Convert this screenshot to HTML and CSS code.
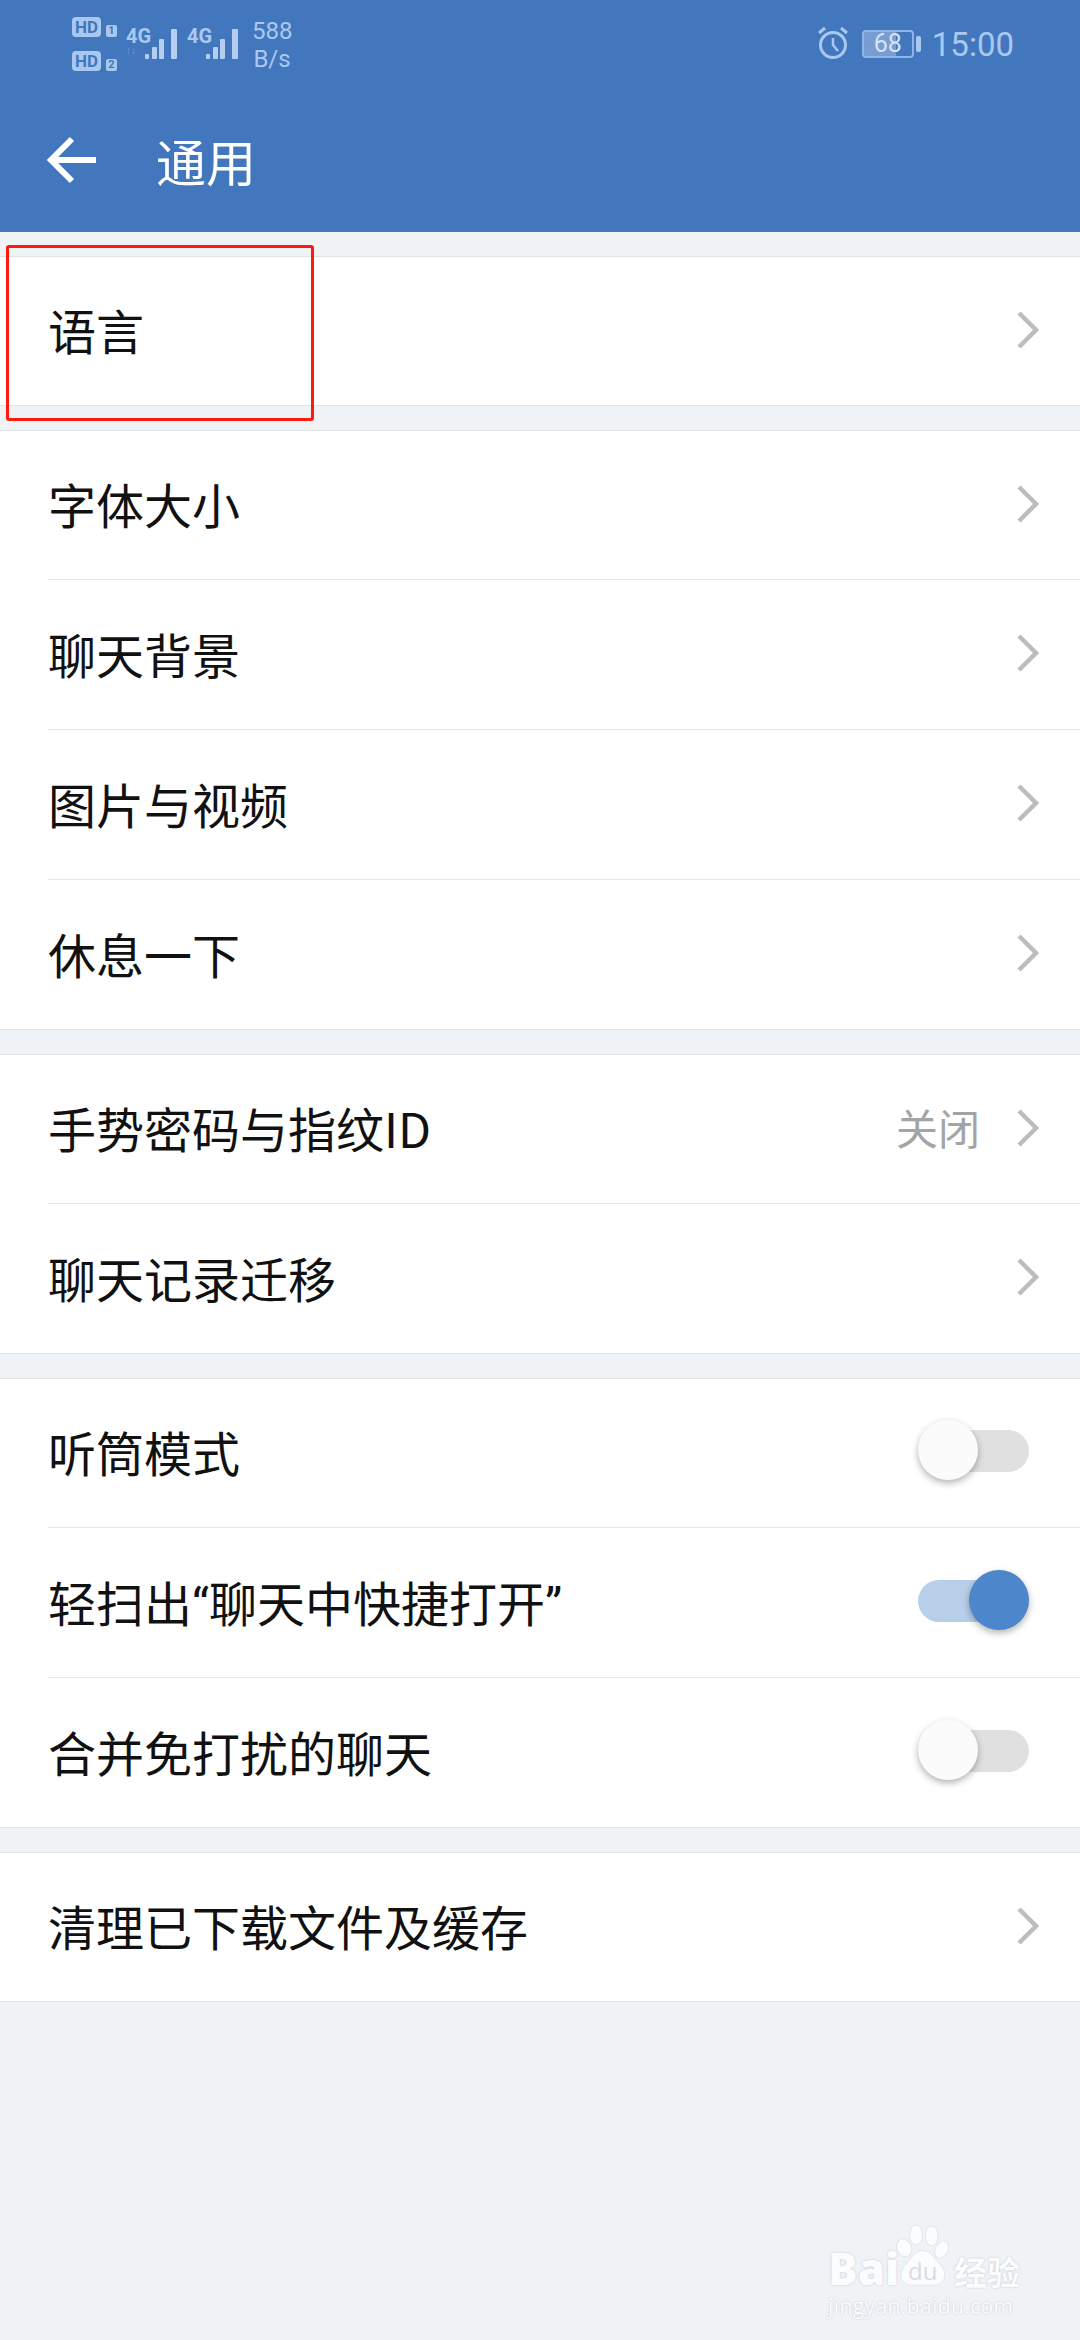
FILE: index.html
```html
<!DOCTYPE html>
<html lang="zh-CN">
<head>
    <meta charset="UTF-8">
    <meta name="viewport" content="width=device-width, initial-scale=1.0">
    <title>通用</title>
    <link rel="stylesheet" href="styles.css">
</head>
<body>
    <div id="screen">
        <div class="header">
            <div class="statusBar">
                <div class="statusLeft">
                    <div class="hdCol">
                        <div class="hdRow"><span class="hd">HD</span><span class="sim">1</span></div>
                        <div class="hdRow"><span class="hd">HD</span><span class="sim">2</span></div>
                    </div>
                    <div class="signal">
                        <div class="netCol"><span class="net">4G</span><span class="updown">↑↓</span></div>
                        <svg width="34" height="32" viewBox="0 0 34 32"><g fill="#b5cef0"><rect x="1" y="26" width="4" height="5" rx="1"/><rect x="8" y="19" width="5" height="12" rx="1"/><rect x="15" y="11" width="5" height="20" rx="1"/><rect x="27" y="1" width="6" height="30" rx="1"/></g></svg>
                    </div>
                    <div class="signal">
                        <div class="netCol"><span class="net">4G</span></div>
                        <svg width="34" height="32" viewBox="0 0 34 32"><g fill="#b5cef0"><rect x="1" y="26" width="4" height="5" rx="1"/><rect x="8" y="19" width="5" height="12" rx="1"/><rect x="15" y="11" width="5" height="20" rx="1"/><rect x="27" y="1" width="6" height="30" rx="1"/></g></svg>
                    </div>
                    <div class="speed">588<br>B/s</div>
                </div>
                <div class="statusRight">
                    <svg class="alarm" width="32" height="34" viewBox="0 0 32 34" fill="none" stroke="#a9c8f0" stroke-width="3">
                        <circle cx="16" cy="19" r="12.5"/>
                        <path d="M16 12v7l5 6" stroke-width="2.5"/>
                        <path d="M2 7l6-5M30 7l-6-5"/>
                    </svg>
                    <div class="battery"><div class="batteryBox"><span class="batteryFill"></span><span class="batteryNum">68</span></div><span class="batteryTip"></span></div>
                    <span class="clock">15:00</span>
                </div>
            </div>
            <div class="navBar">
                <svg class="back" width="50" height="48" viewBox="0 0 50 48" fill="none" stroke="#fff" stroke-width="6"><path d="M49 24H5M25 3L4 24l21 21"/></svg>
                <h1 class="title">通用</h1>
            </div>
        </div>

        <div class="group">
            <div class="row"><span class="label">语言</span><svg class="arrow" viewBox="0 0 22 38"><path d="M2 2l17 17L2 36"/></svg></div>
        </div>

        <div class="group">
            <div class="row"><span class="label">字体大小</span><svg class="arrow" viewBox="0 0 22 38"><path d="M2 2l17 17L2 36"/></svg></div>
            <div class="row"><span class="label">聊天背景</span><svg class="arrow" viewBox="0 0 22 38"><path d="M2 2l17 17L2 36"/></svg></div>
            <div class="row"><span class="label">图片与视频</span><svg class="arrow" viewBox="0 0 22 38"><path d="M2 2l17 17L2 36"/></svg></div>
            <div class="row"><span class="label">休息一下</span><svg class="arrow" viewBox="0 0 22 38"><path d="M2 2l17 17L2 36"/></svg></div>
        </div>

        <div class="group">
            <div class="row"><span class="label">手势密码与指纹ID</span><span class="value">关闭</span><svg class="arrow" viewBox="0 0 22 38"><path d="M2 2l17 17L2 36"/></svg></div>
            <div class="row"><span class="label">聊天记录迁移</span><svg class="arrow" viewBox="0 0 22 38"><path d="M2 2l17 17L2 36"/></svg></div>
        </div>

        <div class="group">
            <div class="row"><span class="label">听筒模式</span><span class="toggle"><span class="knob"></span></span></div>
            <div class="row"><span class="label">轻扫出<span class="quote">“</span>聊天中快捷打开<span class="quote">”</span></span><span class="toggle on"><span class="knob"></span></span></div>
            <div class="row"><span class="label">合并免打扰的聊天</span><span class="toggle"><span class="knob"></span></span></div>
        </div>

        <div class="group">
            <div class="row"><span class="label">清理已下载文件及缓存</span><svg class="arrow" viewBox="0 0 22 38"><path d="M2 2l17 17L2 36"/></svg></div>
        </div>

        <div class="redBox"></div>

        <div class="watermark">
            <div class="wmTop">
                <span class="wmBai">Bai</span>
                <div class="wmPaw">
                    <svg width="53" height="64" viewBox="0 0 58 70">
                        <g fill="#fbfcfe" stroke="#dfe3e8" stroke-width="1">
                            <ellipse cx="9" cy="26" rx="8" ry="10" transform="rotate(-25 9 26)"/>
                            <ellipse cx="22" cy="12" rx="7" ry="11"/>
                            <ellipse cx="39" cy="13" rx="7" ry="11"/>
                            <ellipse cx="50" cy="28" rx="7" ry="10" transform="rotate(25 50 28)"/>
                            <path d="M29 29c10 0 14 10 20 16 8 8 5 22-8 22H18C5 67 1 54 10 45c6-6 9-16 19-16z"/>
                        </g>
                    </svg>
                    <span class="wmDu">du</span>
                </div>
                <span class="wmCn">经验</span>
            </div>
            <div class="wmUrl">jingyan.baidu.com</div>
        </div>
    </div>
</body>
</html>
```

FILE: styles.css
```css
*{
    box-sizing: border-box;
}
html,body{
    margin: 0;
    padding: 0;
}
body{
    background-color: #f0f3f6;
    font-family: "Noto Sans CJK SC", "Noto Sans", sans-serif;
}
#screen{
    position: relative;
    width: 1080px;
    height: 2340px;
    overflow: hidden;
}

.header{
    height: 232px;
    background-color: #4277bd;
    color: #fff;
}
.statusBar{
    display: flex;
    justify-content: space-between;
    height: 72px;
    padding: 17px 66px 0 72px;
    color: #a9c8f0;
    font-family: Roboto, sans-serif;
}
.statusLeft{
    display: flex;
}
.hdCol{
    display: flex;
    flex-direction: column;
    gap: 14px;
    margin-right: 9px;
}
.hdRow{
    display: flex;
    align-items: flex-end;
    gap: 5px;
    height: 20px;
}
.hd{
    width: 29px;
    height: 20px;
    border-radius: 4px;
    background-color: #a9c8f0;
    color: #4277bd;
    font-size: 17px;
    font-weight: 700;
    line-height: 20px;
    text-align: center;
}
.sim{
    width: 11px;
    height: 12px;
    border-radius: 2px;
    background-color: #a9c8f0;
    color: #4277bd;
    font-size: 11px;
    font-weight: 700;
    line-height: 12px;
    text-align: center;
}
.signal{
    display: flex;
    width: 61px;
    height: 44px;
    padding-top: 11px;
}
.netCol{
    display: flex;
    flex-direction: column;
    width: 18px;
}
.net{
    font-family: "Liberation Sans Narrow", Roboto, sans-serif;
    font-size: 20px;
    font-weight: 700;
    line-height: 16px;
}
.updown{
    margin-top: 2px;
    color: #7ea4d8;
    font-size: 10px;
    line-height: 10px;
}
.signal svg{
    flex-shrink: 0;
}
.speed{
    margin-left: 4px;
    width: 40px;
    font-size: 24px;
    line-height: 28px;
    text-align: center;
}
.statusRight{
    display: flex;
    align-items: flex-start;
}
.alarm{
    margin-top: 9px;
}
.battery{
    display: flex;
    align-items: center;
    height: 28px;
    margin: 13px 11px 0 13px;
}
.batteryBox{
    position: relative;
    width: 52px;
    height: 28px;
    border: 2px solid #8fb4e6;
    border-radius: 4px;
    overflow: hidden;
}
.batteryFill{
    position: absolute;
    left: 0;
    top: 0;
    bottom: 0;
    width: 68%;
    background-color: rgba(200, 215, 240, 0.4);
}
.batteryNum{
    position: relative;
    display: block;
    color: #d5e3f5;
    font-size: 25px;
    line-height: 24px;
    text-align: center;
}
.batteryTip{
    width: 5px;
    height: 16px;
    margin-left: 2px;
    border-radius: 2px;
    background-color: #a9c8f0;
}
.clock{
    margin-top: 9px;
    font-size: 33px;
    line-height: 38px;
}

.navBar{
    display: flex;
    align-items: center;
    height: 160px;
    padding: 16px 0 0 47px;
}
.back{
    flex-shrink: 0;
}
.title{
    margin: 0 0 0 59px;
    font-size: 50px;
    font-weight: 400;
    line-height: 70px;
}

.group{
    margin-top: 24px;
    background-color: #fff;
    border-top: 1px solid #e0e2e5;
    border-bottom: 1px solid #e0e2e5;
}
.row{
    display: flex;
    align-items: center;
    height: 150px;
    margin-left: 48px;
    padding-right: 42px;
    border-top: 1px solid #e4e6e8;
}
.row:first-child{
    height: 148px;
    border-top: none;
}
.label{
    flex: 1;
    padding-bottom: 4px;
    color: #111;
    font-size: 48px;
    line-height: 66px;
}
.quote{
    font-family: Roboto, sans-serif;
    line-height: 0;
}
.value{
    margin-right: 37px;
    padding-bottom: 4px;
    color: #a2a5a8;
    font-size: 42px;
    line-height: 60px;
}
.arrow{
    width: 22px;
    height: 38px;
    margin-right: -1px;
    margin-bottom: 3px;
    fill: none;
    stroke: #bdbdbd;
    stroke-width: 4.5;
}
.toggle{
    position: relative;
    width: 111px;
    height: 42px;
    margin-right: 9px;
    margin-bottom: 4px;
    border-radius: 21px;
    background-color: #e0e0e0;
}
.knob{
    position: absolute;
    left: 0;
    top: -10px;
    width: 60px;
    height: 60px;
    border-radius: 50%;
    background-color: #fbfbfb;
    box-shadow: 0 3px 7px rgba(0, 0, 0, 0.3);
}
.toggle.on{
    background-color: #b8cfe9;
}
.toggle.on .knob{
    left: 51px;
    background-color: #4e86cb;
}

.redBox{
    position: absolute;
    left: 6px;
    top: 245px;
    width: 308px;
    height: 176px;
    border: 3px solid #ff1a10;
    border-radius: 3px;
}

.watermark{
    position: absolute;
    left: 828px;
    top: 2220px;
    width: 195px;
    color: #fbfcfe;
}
.wmTop{
    display: flex;
    align-items: flex-end;
    height: 70px;
}
.wmBai{
    width: 66px;
    font-family: "Open Sans", sans-serif;
    font-size: 44px;
    font-weight: 800;
    line-height: 44px;
    text-shadow: 0 0 2px #b9bec5;
}
.wmPaw{
    position: relative;
    width: 58px;
    height: 70px;
    padding: 4px 0 0 2px;
    flex-shrink: 0;
}
.wmPaw svg{
    display: block;
}
.wmDu{
    position: absolute;
    left: 14px;
    top: 38px;
    color: #d8dce2;
    font-family: "Open Sans", sans-serif;
    font-size: 24px;
    line-height: 26px;
}
.wmCn{
    margin-left: 2px;
    font-size: 33px;
    font-weight: 700;
    line-height: 38px;
    text-shadow: 0 0 2px #b9bec5;
    white-space: nowrap;
}
.wmUrl{
    margin-top: 4px;
    font-family: "Open Sans", sans-serif;
    font-size: 21px;
    letter-spacing: 0.4px;
    line-height: 24px;
    text-shadow: 0 0 2px #b9bec5;
    white-space: nowrap;
}
```
